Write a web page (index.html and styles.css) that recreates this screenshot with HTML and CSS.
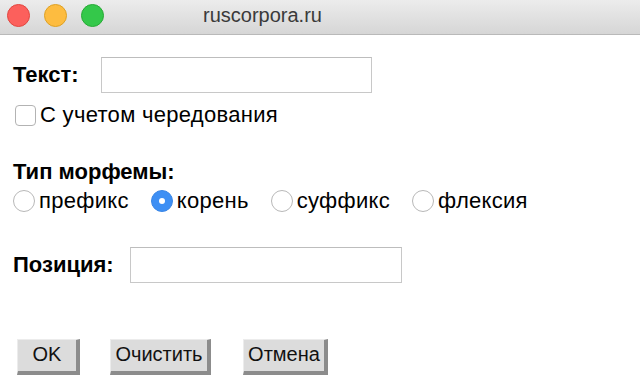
FILE: index.html
```html
<!DOCTYPE html>
<html lang="ru">
<head>
<meta charset="utf-8">
<title>ruscorpora.ru</title>
<link rel="stylesheet" href="styles.css">
</head>
<body>
<div class="window">
  <header class="titlebar">
    <div class="lights">
      <span class="light red"></span>
      <span class="light yellow"></span>
      <span class="light green"></span>
    </div>
    <div class="title">ruscorpora.ru</div>
  </header>
  <main class="content">
    <div class="row row-text">
      <label class="label" for="t">Текст:</label>
      <input class="field field-text" id="t" type="text">
    </div>
    <div class="row row-check">
      <input class="check" id="c" type="checkbox">
      <label class="opt" for="c">С учетом чередования</label>
    </div>
    <div class="label heading">Тип морфемы:</div>
    <div class="row radios">
      <span class="radio-item"><input class="radio" type="radio" name="m" id="r1"><label class="opt" for="r1">префикс</label></span>
      <span class="radio-item"><input class="radio" type="radio" name="m" id="r2" checked><label class="opt" for="r2">корень</label></span>
      <span class="radio-item"><input class="radio" type="radio" name="m" id="r3"><label class="opt" for="r3">суффикс</label></span>
      <span class="radio-item"><input class="radio" type="radio" name="m" id="r4"><label class="opt" for="r4">флексия</label></span>
    </div>
    <div class="row row-pos">
      <label class="label" for="p">Позиция:</label>
      <input class="field field-pos" id="p" type="text">
    </div>
    <div class="row buttons">
      <button class="btn btn-ok" type="button">OK</button>
      <button class="btn btn-clear" type="button">Очистить</button>
      <button class="btn btn-cancel" type="button">Отмена</button>
    </div>
  </main>
</div>
</body>
</html>
```

FILE: styles.css
```css
* { box-sizing: border-box; }
html, body { margin: 0; padding: 0; background: #fff; }
body {
  font-family: "Liberation Sans", Arial, sans-serif;
  color: #111;
  width: 640px;
  height: 381px;
  overflow: hidden;
}
.titlebar {
  height: 35px;
  background: linear-gradient(#ececec, #d6d6d6);
  border-bottom: 1px solid #b9b9b9;
  display: flex;
  align-items: center;
  position: relative;
}
.lights {
  display: flex;
  gap: 14px;
  padding-left: 7px;
  padding-bottom: 4px;
}
.light {
  width: 23px;
  height: 23px;
  border-radius: 50%;
  display: block;
}
.red { background: #fc605c; border: 1px solid #e2463f; }
.yellow { background: #fdbc40; border: 1px solid #dea123; }
.green { background: #34c84a; border: 1px solid #27aa35; }
.title {
  position: absolute;
  left: 203px;
  top: 4px;
  font-size: 20px;
  color: #3a3a3a;
}
.content {
  padding: 22px 0 0 13px;
}
.row { display: flex; align-items: center; }
.label {
  font-weight: bold;
  font-size: 22px;
  color: #000;
}
.field {
  height: 36px;
  border: 1px solid #c8c8c8;
  border-top-color: #bdbdbd;
  background: #fff;
  padding: 0;
  outline: none;
}
.field-text { width: 271px; margin-left: 22px; }
.row-check { margin-top: 9px; }
.check {
  appearance: none;
  -webkit-appearance: none;
  width: 21px;
  height: 21px;
  margin: 0 4px 0 2px;
  border: 1px solid #b3b3b3;
  border-radius: 4px;
  background: #fff;
}
.opt { font-size: 22px; color: #000; letter-spacing: 0.3px; }
.heading { margin-top: 31px; line-height: 25px; }
.radios { margin-top: 4px; }
.radio-item { display: flex; align-items: center; margin-right: 22px; }
.radio {
  appearance: none;
  -webkit-appearance: none;
  width: 22px;
  height: 22px;
  margin: 0 4px 0 0;
  border: 1px solid #b8b8b8;
  border-radius: 50%;
  background: #fff;
  position: relative;
}
.radio:checked {
  background: #3d8ff4;
  border-color: #3a86e6;
}
.radio:checked::after {
  content: "";
  position: absolute;
  left: 7px;
  top: 7px;
  width: 6px;
  height: 6px;
  border-radius: 50%;
  background: #fff;
}
.row-pos { margin-top: 33px; }
.field-pos { width: 272px; margin-left: 16px; }
.buttons { margin-top: 56px; padding-left: 4px; align-items: flex-start; }
.btn {
  font-family: "Liberation Sans", Arial, sans-serif;
  font-size: 20px;
  color: #111;
  height: 36px;
  padding: 0 0 2px;
  background: #dcdcdc;
  border-style: solid;
  border-width: 1px 4px 4px 1px;
  border-color: #ececec #8c8c8c #8c8c8c #ececec;
  border-radius: 0;
}
.btn-ok { width: 63px; }
.btn-clear { width: 101px; margin-left: 30px; }
.btn-cancel { width: 85px; margin-left: 32px; }
```
